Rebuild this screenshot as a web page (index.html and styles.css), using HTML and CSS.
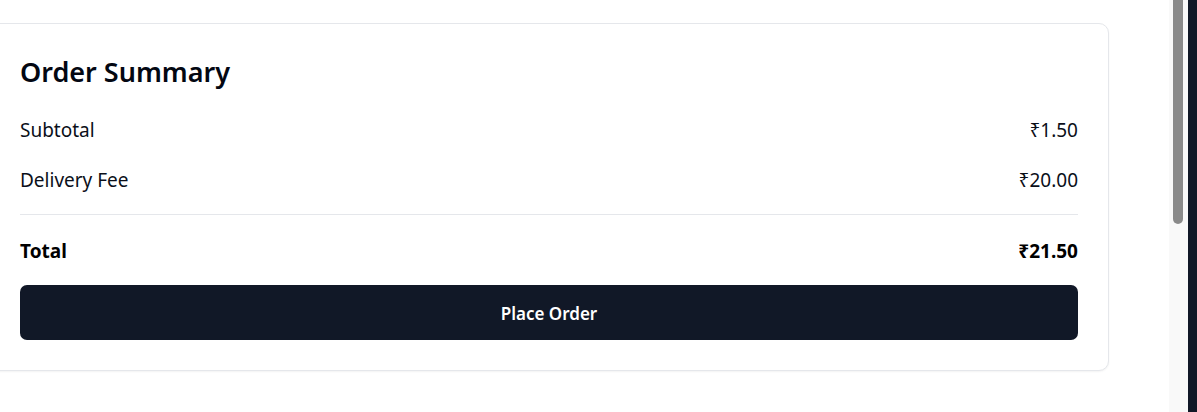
FILE: index.html
```html
<!DOCTYPE html>
<html lang="en">
<head>
<meta charset="utf-8">
<title>Order Summary</title>
<link rel="stylesheet" href="styles.css">
</head>
<body>
<div class="page">
  <main class="main">
    <section class="card">
      <h2 class="title">Order Summary</h2>
      <div class="rows">
        <div class="row"><span>Subtotal</span><span>₹1.50</span></div>
        <div class="row"><span>Delivery Fee</span><span>₹20.00</span></div>
        <div class="row total"><span>Total</span><span>₹21.50</span></div>
      </div>
      <button class="btn">Place Order</button>
    </section>
  </main>
  <div class="scrollbar"><div class="thumb"></div></div>
  <div class="edge"></div>
</div>
</body>
</html>
```
FILE: styles.css
```css
* { box-sizing: border-box; }
html, body { margin: 0; padding: 0; }
body {
  font-family: "Noto Sans", "Open Sans", sans-serif;
  color: #0b0f19;
  background: #ffffff;
}
.page {
  display: flex;
  height: 412px;
  overflow: hidden;
}
.main {
  flex: 1;
  padding-top: 23px;
  overflow: hidden;
}
.card {
  margin-left: -11px;
  width: 1120px;
  background: #fff;
  border: 1px solid #e5e7eb;
  border-radius: 10px;
  box-shadow: 0 1px 2px rgba(0,0,0,0.05);
  padding: 30px;
}
.title {
  margin: 0 0 20px;
  font-size: 27px;
  line-height: 36px;
  padding-bottom: 4px;
  font-weight: 600;
  color: #030712;
}
.rows {
  display: flex;
  flex-direction: column;
  gap: 20px;
}
.row {
  display: flex;
  justify-content: space-between;
  font-size: 19px;
  line-height: 30px;
  color: #0b0f19;
}
.row > span { position: relative; top: 1px; }
.row.total {
  border-top: 1px solid #e5e7eb;
  padding-top: 20px;
  font-weight: 700;
  color: #000;
}
.btn {
  display: block;
  width: 100%;
  margin-top: 20px;
  height: 55px;
  padding-top: 2px;
  border: 0;
  border-radius: 7px;
  background: #111827;
  color: #fff;
  font-family: inherit;
  font-size: 17px;
  font-weight: 600;
}
.scrollbar {
  width: 19px;
  flex: none;
  background: #f9f9f9;
  padding: 0 4px;
}
.thumb {
  width: 10px;
  height: 224px;
  background: #8a8a8a;
  border-radius: 0 0 5px 5px;
}
.edge {
  width: 9px;
  flex: none;
  background: #111827;
}
```
